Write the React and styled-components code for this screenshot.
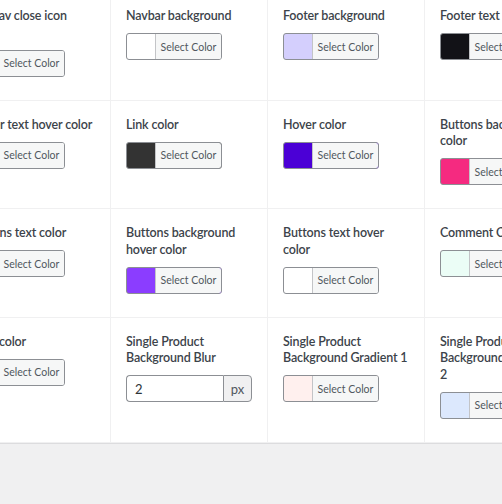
import React from 'react';
import styled, { createGlobalStyle } from 'styled-components';

const Global = createGlobalStyle`
  html, body { margin: 0; padding: 0; background: #f0f0f1; overflow: hidden; }
  body { font-family: Lato, "Noto Sans", sans-serif; }
`;

const Page = styled.div`
  width: 502px;
  height: 504px;
  overflow: hidden;
`;

const Panel = styled.div`
  display: grid;
  grid-template-columns: 157px 157px 157px 150px;
  width: max-content;
  margin: -8px 0 0 -46px;
  background: #fff;
  border-bottom: 1px solid #dcdcde;
`;

const Cell = styled.div`
  display: flex;
  flex-direction: column;
  align-items: flex-start;
  box-sizing: border-box;
  min-width: 0;
  padding: 15px 15px 23px;
  border-right: 1px solid #f0f0f1;
  border-bottom: 1px solid #f0f0f1;
`;

const Label = styled.div`
  padding-top: 1px;
  font-size: 12.5px;
  letter-spacing: -0.15px;
  line-height: 16.5px;
  font-weight: 600;
  color: #3c434a;
  min-height: ${p => (p.$lines || 1) * 16.5}px;
`;

const ColorButton = styled.button`
  display: flex;
  align-items: stretch;
  box-sizing: border-box;
  width: 96px;
  height: 27px;
  margin: 8.5px 0 0;
  padding: 0;
  border: 1px solid #8c8f94;
  border-radius: 3px;
  background: ${p => p.$color};
  overflow: hidden;
  cursor: pointer;
`;

const Swatch = styled.span`
  flex: none;
  width: 28px;
`;

const ButtonText = styled.span`
  flex: 1;
  display: flex;
  align-items: center;
  justify-content: center;
  background: #f6f7f7;
  border-left: 1px solid #c3c4c7;
  font-family: Lato, "Noto Sans", sans-serif;
  font-size: 10.5px;
  color: #50575e;
  white-space: nowrap;
`;

const InputGroup = styled.div`
  display: flex;
  width: 126px;
  height: 27px;
  margin-top: 8.5px;
`;

const NumberInput = styled.input`
  box-sizing: border-box;
  width: 97px;
  height: 100%;
  margin: 0;
  padding: 0 8px;
  border: 1px solid #8c8f94;
  border-right: none;
  border-radius: 4px 0 0 4px;
  outline: none;
  font-family: Lato, "Noto Sans", sans-serif;
  font-size: 13px;
  color: #2c3338;
  background: #fff;
`;

const Unit = styled.span`
  box-sizing: border-box;
  width: 29px;
  display: flex;
  align-items: center;
  justify-content: center;
  border: 1px solid #8c8f94;
  border-radius: 0 4px 4px 0;
  background: #f0f0f1;
  font-size: 13px;
  color: #50575e;
`;

const fields = [
  { label: 'Sidenav close icon', color: '#ffffff', lines: 2 },
  { label: 'Navbar background', color: '#ffffff' },
  { label: 'Footer background', color: '#d4cffd' },
  { label: 'Footer text color', color: '#121217' },
  { label: 'Footer text hover color', color: '#ffffff' },
  { label: 'Link color', color: '#333333' },
  { label: 'Hover color', color: '#4b00d6' },
  { label: 'Buttons background color', color: '#f52a80' },
  { label: 'Buttons text color', color: '#ffffff' },
  { label: 'Buttons background hover color', color: '#8b3dff' },
  { label: 'Buttons text hover color', color: '#ffffff' },
  { label: 'Comment Color', color: '#ebfdf6' },
  { label: 'Price color', color: '#ffffff' },
  { label: 'Single Product Background Blur', unit: 'px', value: '2' },
  { label: 'Single Product Background Gradient 1', color: '#fff0ee' },
  { label: 'Single Product Background Gradient 2', color: '#dce8fd' },
];

export default function App() {
  return (
    <Page>
      <Global />
      <Panel>
        {fields.map((f, i) => (
          <Cell key={i}>
            <Label $lines={f.lines}>{f.label}</Label>
            {f.unit ? (
              <InputGroup>
                <NumberInput type="text" defaultValue={f.value} />
                <Unit>{f.unit}</Unit>
              </InputGroup>
            ) : (
              <ColorButton type="button" $color={f.color}>
                <Swatch />
                <ButtonText>Select Color</ButtonText>
              </ColorButton>
            )}
          </Cell>
        ))}
      </Panel>
    </Page>
  );
}
